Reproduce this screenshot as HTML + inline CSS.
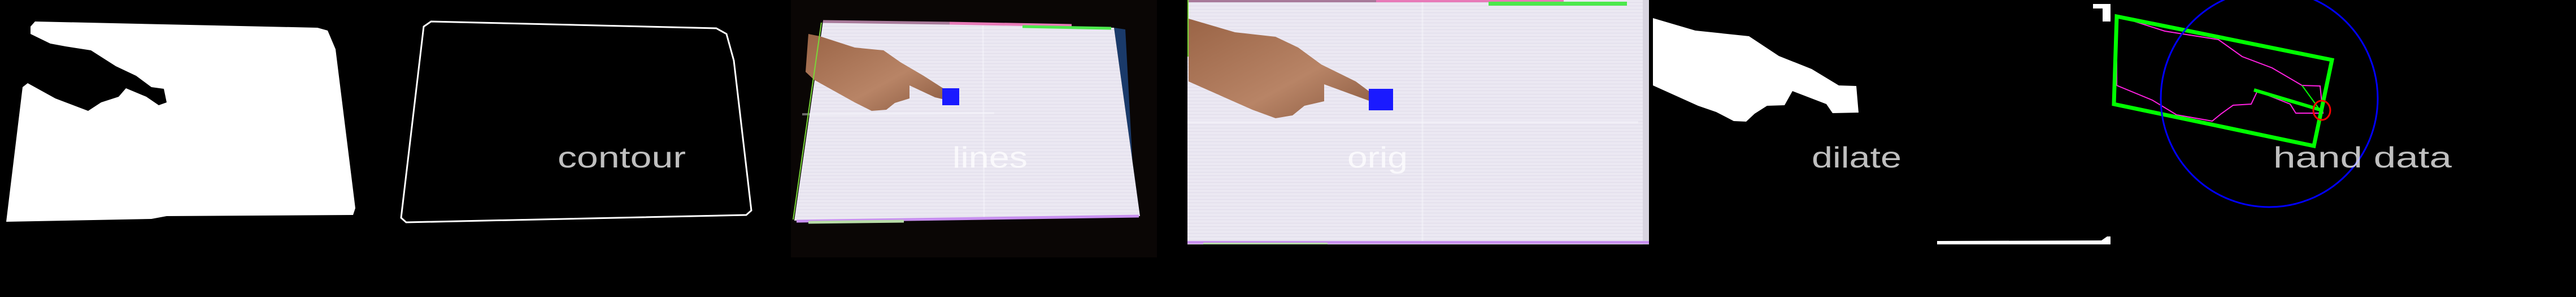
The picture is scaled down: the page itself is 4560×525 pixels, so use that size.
<!DOCTYPE html>
<html><head><meta charset="utf-8"><style>
html,body{margin:0;padding:0;background:#000;width:4560px;height:525px;overflow:hidden}
svg{display:block}
text{font-family:"Liberation Sans",sans-serif;fill:#fff;fill-opacity:0.75}
</style></head><body>
<svg width="4560" height="525" viewBox="0 0 4560 525" xmlns="http://www.w3.org/2000/svg">
<defs>
<pattern id="stripes" width="8" height="6" patternUnits="userSpaceOnUse">
<rect width="8" height="6" fill="#ebe8f2"/><rect y="4" width="8" height="1" fill="#e0dcea"/>
</pattern>
<linearGradient id="skin" x1="0" y1="0" x2="1" y2="1">
<stop offset="0" stop-color="#9a6446"/><stop offset="0.6" stop-color="#b88466"/><stop offset="1" stop-color="#8a5a40"/>
</linearGradient>
</defs>
<rect width="4560" height="525" fill="#000"/>

<!-- Panel 1 mask -->
<polygon fill="#fff" points="62,38 54,47 54,60 89,77 116,82 161,89 205,117 241,134 268,154 290,157 295,181 281,186 259,171 223,156 210,171 179,181 156,196 98,174 49,147 40,154 11,392 268,387 295,382 625,380 629,368 594,87 580,54 562,49"/>

<!-- Panel 2 contour -->
<polygon fill="none" stroke="#fff" stroke-width="3" points="763,38 1268,50 1286,60 1299,107 1330,372 1321,380 719,393 710,385 750,47"/>
<text x="987" y="296" font-size="52" textLength="227" lengthAdjust="spacingAndGlyphs">contour</text>

<!-- Panel 3 lines -->
<rect x="1400" y="0" width="648" height="455" fill="#0a0605"/>
<polygon fill="#1a3a6a" points="1972,49 1992,52 2010,382 2018,382"/>
<polygon fill="url(#stripes)" points="1457,37 1972,49 2018,382 1406,390"/>
<line x1="1740" y1="45" x2="1742" y2="385" stroke="#fafaff" stroke-width="3" opacity="0.4"/>
<line x1="1420" y1="202" x2="1760" y2="200" stroke="#fafaff" stroke-width="4" opacity="0.4"/>
<polygon fill="url(#skin)" points="1451,64 1513,84 1564,89 1594,110 1635,134 1671,157 1676,177 1655,172 1610,151 1610,174 1584,182 1569,194 1543,196 1513,181 1441,141 1426,127 1431,60"/>
<rect x="1668" y="156" width="30" height="30" fill="#1a1aff"/>
<line x1="1457" y1="38" x2="1681" y2="41" stroke="#a87a9a" stroke-width="5"/>
<line x1="1681" y1="41" x2="1897" y2="45" stroke="#e87ab8" stroke-width="5"/>
<line x1="1810" y1="47" x2="1967" y2="50" stroke="#4ce84c" stroke-width="5"/>
<line x1="1410" y1="391" x2="2016" y2="382" stroke="#c890f0" stroke-width="5"/>
<line x1="1431" y1="393" x2="1600" y2="391" stroke="#b8dca8" stroke-width="5"/>
<line x1="1454" y1="40" x2="1404" y2="388" stroke="#7ad838" stroke-width="2"/>
<text x="1686" y="296" font-size="52" textLength="133" lengthAdjust="spacingAndGlyphs">lines</text>

<!-- Panel 4 orig -->
<rect x="2102" y="0" width="817" height="432" fill="url(#stripes)"/>
<line x1="2518" y1="0" x2="2518" y2="430" stroke="#fafaff" stroke-width="3" opacity="0.4"/>
<line x1="2102" y1="216" x2="2900" y2="216" stroke="#fafaff" stroke-width="4" opacity="0.4"/>
<rect x="2908" y="0" width="11" height="432" fill="#d8d4e0"/>
<polygon fill="url(#skin)" points="2104,33 2186,57 2258,65 2298,84 2339,114 2400,144 2431,167 2426,179 2344,149 2344,179 2309,187 2288,204 2258,209 2217,194 2104,144"/>
<rect x="2423" y="157" width="43" height="38" fill="#1a1aff"/>
<rect x="2102" y="0" width="334" height="4" fill="#a87a9a"/>
<rect x="2436" y="0" width="332" height="4" fill="#e87ab8"/>
<rect x="2635" y="3" width="245" height="7" fill="#4ce84c"/>
<rect x="2102" y="426" width="817" height="5" fill="#c890f0"/>
<rect x="2130" y="429" width="220" height="3" fill="#b8dca8"/>
<rect x="2102" y="0" width="2" height="100" fill="#7ad838"/>
<text x="2385" y="296" font-size="52" textLength="107" lengthAdjust="spacingAndGlyphs">orig</text>

<!-- Panel 5 dilate -->
<polygon fill="#fff" points="2926,32 3001,54 3096,64 3149,99 3207,122 3255,151 3286,152 3290,199 3244,200 3233,184 3173,161 3159,186 3128,187 3106,201 3091,215 3069,214 3038,198 3006,187 2926,151"/>
<text x="3207" y="296" font-size="52" textLength="159" lengthAdjust="spacingAndGlyphs">dilate</text>
<polygon fill="#fff" points="3429,426 3720,425 3730,418 3736,418 3736,432 3429,432"/>

<!-- Panel 6 hand data -->
<rect x="3705" y="7" width="31" height="8" fill="#fff"/>
<rect x="3722" y="7" width="14" height="31" fill="#fff"/>
<polyline fill="none" stroke="#ff20e0" stroke-width="2" points="3779,38 3832,55 3927,70 3969,100 4022,120 4075,151 4107,152 4112,200 4064,200 4054,184 3996,161 3985,184 3953,186 3932,201 3916,214 3853,203 3810,177 3747,151 3747,33"/>
<polygon fill="none" stroke="#00ff00" stroke-width="7" points="3747,29 4128,106 4096,258 3742,184"/>
<line x1="3990" y1="159" x2="4107" y2="194" stroke="#00ff00" stroke-width="6"/>
<line x1="4075" y1="151" x2="4107" y2="195" stroke="#00ff00" stroke-width="2"/>
<circle cx="4017" cy="174" r="192" fill="none" stroke="#0000ff" stroke-width="3"/>
<ellipse cx="4110" cy="195" rx="15" ry="17" fill="none" stroke="#ff0000" stroke-width="3"/>
<text x="4024" y="296" font-size="52" textLength="316" lengthAdjust="spacingAndGlyphs">hand data</text>
</svg>
</body></html>
